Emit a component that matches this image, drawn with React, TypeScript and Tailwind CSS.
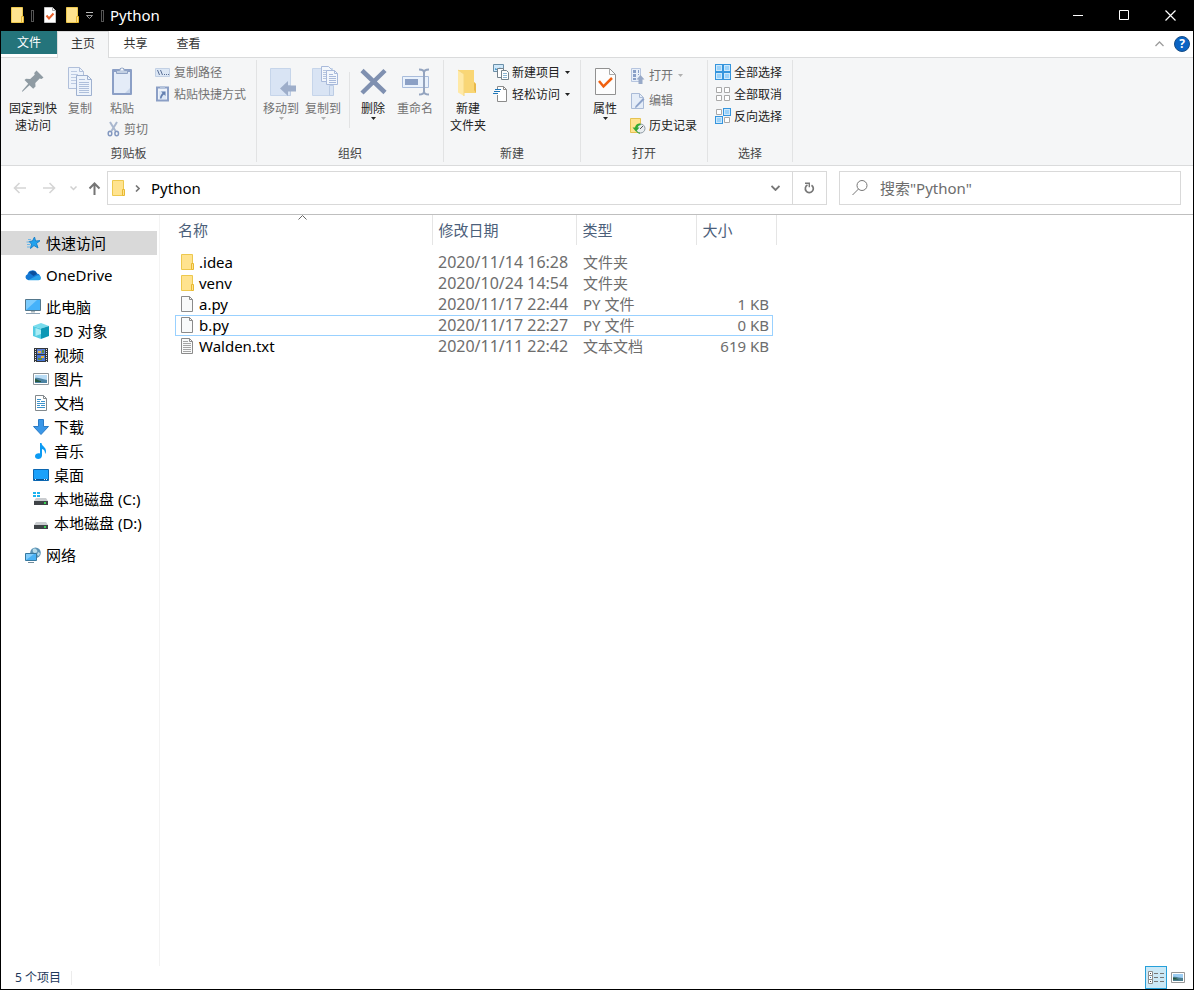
import React from 'react';

interface FileItem {
  name: string;
  kind: 'folder' | 'file' | 'text';
  modified: string;
  type: string;
  size: string;
  focused?: boolean;
}

const files: FileItem[] = [
  { name: '.idea', kind: 'folder', modified: '2020/11/14 16:28', type: '文件夹', size: '' },
  { name: 'venv', kind: 'folder', modified: '2020/10/24 14:54', type: '文件夹', size: '' },
  { name: 'a.py', kind: 'file', modified: '2020/11/17 22:44', type: 'PY 文件', size: '1 KB' },
  { name: 'b.py', kind: 'file', modified: '2020/11/17 22:27', type: 'PY 文件', size: '0 KB', focused: true },
  { name: 'Walden.txt', kind: 'text', modified: '2020/11/11 22:42', type: '文本文档', size: '619 KB' },
];

/* ---------- icons ---------- */

function Svg({ w, h, children }: { w: number; h: number; children: React.ReactNode }) {
  return (
    <svg width={w} height={h} viewBox={`0 0 ${w} ${h}`} fill="none" className="shrink-0" aria-hidden="true">
      {children}
    </svg>
  );
}

function FolderIcon() {
  return (
    <Svg w={14} h={17}>
      <path d="M.5.5h11v15H.5z" fill="#ffe38f" stroke="#edc84e" />
      <path d="M10.5 9.5h2v6h-2z" fill="#ffe38f" stroke="#e8b931" />
    </Svg>
  );
}

function FileIcon({ lines }: { lines?: boolean }) {
  return (
    <Svg w={14} h={17}>
      <path d="M.5.5h8l3 3v12H.5z" fill="#f9fafa" stroke="#8b8b8b" />
      <path d="M8.5.5v3h3" stroke="#8b8b8b" />
      {lines && <path d="M2 3.5h5M2 5.5h8M2 7.5h8M2 9.5h8M2 11.5h8M2 13.5h8" stroke="#a5a5a5" />}
    </Svg>
  );
}

function PropertiesSmallIcon() {
  return (
    <Svg w={12} h={17}>
      <path d="M.5.5h8l3 3v12H.5z" fill="#fff" stroke="#c4c4c4" />
      <path d="M8.5.5v3h3" stroke="#a0a0a0" />
      <path d="m2.5 8.5 2.5 3 4.5-5" stroke="#e8602c" strokeWidth="2" />
    </Svg>
  );
}

function Caret({ light }: { light?: boolean }) {
  return (
    <Svg w={5} h={3}>
      <path d="M0 0h5L2.5 3z" fill={light ? '#b0b0b0' : '#222'} />
    </Svg>
  );
}

function PinIcon() {
  return (
    <Svg w={32} h={32}>
      <path
        d="m19.5 4.5 7 7-2 1.5-1.8-.4-4.4 4.4.2 3.6-2.3 2.2-3.7-3.6-6.700 6.300-.8.2.2-1 6-7-3.700-3.700 1.500-1.200 4.200.2 4.500-4.300-.5-1.800z"
        fill="#8f9ba3"
      />
    </Svg>
  );
}

function CopyIcon() {
  return (
    <Svg w={32} h={32}>
      <path d="M4.5 1.5h11l4 4v17h-15z" fill="#edf3fb" stroke="#b0bfda" />
      <path d="M15.5 1.5v4h4" stroke="#b0bfda" />
      <path d="M7 5.5h6M7 8.5h7M7 11.5h5M7 14.5h5M7 17.5h5" stroke="#bccae2" />
      <path d="M12.5 9.5h11l4 4v16h-15z" fill="#edf3fb" stroke="#9fb1d0" />
      <path d="M23.5 9.5v4h4" stroke="#9fb1d0" />
      <path d="M15 13.5h6M15 16.5h10M15 18.5h10M15 20.5h10M15 22.5h10M15 24.5h10M15 26.5h10" stroke="#aebfdb" />
    </Svg>
  );
}

function PasteIcon() {
  return (
    <Svg w={32} h={32}>
      <rect x="6" y="3" width="20" height="26" rx="1" fill="#8b9fc6" />
      <path d="M8 6h16v21H8z" fill="#e4ecf8" />
      <path d="M19 27l5-5v5z" fill="#c7d5ea" />
      <path d="M10.5 7.5v-3h3a2.5 2.5 0 0 1 5 0h3v3z" fill="#c3d0e3" stroke="#8fa2c4" />
      <circle cx="16" cy="3.5" r="1" fill="#fff" />
    </Svg>
  );
}

function ScissorsIcon() {
  return (
    <Svg w={14} h={16}>
      <path d="m3 1 5.5 9M10 1 4.5 10" stroke="#a9b7ce" strokeWidth="2" />
      <ellipse cx="3" cy="12.5" rx="1.8" ry="2.3" stroke="#8398c0" strokeWidth="1.5" />
      <ellipse cx="9.7" cy="12.5" rx="1.8" ry="2.3" stroke="#8398c0" strokeWidth="1.5" />
    </Svg>
  );
}

function CopyPathIcon() {
  return (
    <Svg w={16} h={16}>
      <path d="M.5 4.5h14v8H.5z" fill="#dce7f5" stroke="#c2d0e4" />
      <path d="m2.5 6 2 5M5.5 6l2 5" stroke="#5b7097" />
      <path d="M9 10.5h1M11 10.5h1M13 10.5h1" stroke="#5b7097" />
    </Svg>
  );
}

function PasteShortcutIcon() {
  return (
    <Svg w={16} h={16}>
      <path d="M2 1.5h11v13H2z" fill="#eef3fa" stroke="#8b9fc6" strokeWidth="2" />
      <path d="M5 0h5v3H5z" fill="#b5c4dc" />
      <path d="M4 5h7v8H4z" fill="#dde8f6" />
      <path d="M6 5.5h4.5V10L9 8.5C7.5 9.5 7 10.500 6.500 12.500H5C5 10 6 8.500 7.500 7z" fill="#6580b0" />
    </Svg>
  );
}

function MoveToIcon() {
  return (
    <Svg w={32} h={32}>
      <path d="M5.5 2.5h20v27h-20z" fill="#d9e4f4" stroke="#c6d5ea" />
      <path d="M22.5 19.5h3v10h-3z" fill="#d9e4f4" stroke="#bccce4" />
      <path d="M15 22.5 23 15v4.5h8v6h-8V30z" fill="#9eaeca" />
    </Svg>
  );
}

function CopyToIcon() {
  return (
    <Svg w={32} h={32}>
      <path d="M5.5 2.5h20v27h-20z" fill="#d9e4f4" stroke="#c6d5ea" />
      <path d="M22.5 19.5h4v10h-4z" fill="#d9e4f4" stroke="#bccce4" />
      <path d="M14.5.5h7l3 3v12h-10z" fill="#f3f7fc" stroke="#a9badb" />
      <path d="M16 4.5h4M16 6.5h4M16 8.5h4M16 10.5h4M16 12.5h4" stroke="#b7c6e0" />
      <path d="M19.5 4.5h8l3 3v11h-11z" fill="#f3f7fc" stroke="#a9badb" />
      <path d="M27.5 4.5v3h3M22 8.5h4M22 10.5h7M22 12.5h7M22 14.5h7M22 16.5h7" stroke="#a9badb" />
    </Svg>
  );
}

function DeleteIcon() {
  return (
    <Svg w={32} h={32}>
      <path d="m5 4.5 23 22M28 4.5 5 27" stroke="#7f90b0" strokeWidth="4.5" />
    </Svg>
  );
}

function RenameIcon() {
  return (
    <Svg w={32} h={32}>
      <path d="M3.5 10.5h26v11h-26z" fill="#eaf2fc" stroke="#a9bcdb" />
      <path d="M6 13h13v6H6z" fill="#8ba0c5" />
      <path d="M20 3.5c3 0 5 .5 5 3v19c0 2-2 3-5 3M30 3.5c-3 0-5 .5-5 3v19c0 2 2 3 5 3" stroke="#94a4bf" strokeWidth="2" />
    </Svg>
  );
}

function NewFolderIcon() {
  return (
    <Svg w={32} h={32}>
      <path d="M6 4h16v12l2 2v9H10z" fill="#f9d675" />
      <path d="M22 16v8l2 3v-9z" fill="#e9b94b" />
      <path d="m6 4 6 4v22l-6-3.500z" fill="#ffe9a6" />
      <path d="m6 4 6 4v22" stroke="#f5d67e" />
    </Svg>
  );
}

function NewItemIcon() {
  return (
    <Svg w={16} h={16}>
      <path d="M.5.5h10v7H.5z" fill="#cfe8fa" stroke="#6b8fa8" />
      <path d="M2 6h7V5L7 3.500 4 5 2 4z" fill="#4d9cd0" />
      <path d="M4.5 4.5h6v9h-6z" fill="#fff" stroke="#75828c" />
      <path d="M8.500 6.500h5l2 2v7h-7z" fill="#fff" stroke="#75828c" />
      <path d="M10 9.5h4M10 11.5h4M10 13.5h4" stroke="#8cb6d3" />
    </Svg>
  );
}

function EasyAccessIcon() {
  return (
    <Svg w={16} h={16}>
      <path d="M4.5 3V.5h6l3 3v12h-9V9" fill="#fff" stroke="#8b8b8b" />
      <path d="M10.5.5v3h3" stroke="#8b8b8b" />
      <path d="M2 3.5h6M1 5.5h6M0 7.5h5" stroke="#1f77b8" />
    </Svg>
  );
}

function PropertiesIcon() {
  return (
    <Svg w={32} h={32}>
      <path d="M6.5 2.5h14l6 6v20h-20z" fill="#fdfdfd" stroke="#919191" />
      <path d="M20.5 2.5v6h6" stroke="#a9a9a9" />
      <path d="m10 15 4.5 5.5L23 12" stroke="#f0600f" strokeWidth="2.5" />
    </Svg>
  );
}

function OpenIcon() {
  return (
    <Svg w={16} h={16}>
      <path d="M1.5.5h9v13h-9z" fill="#e8eff9" stroke="#b6c5df" />
      <path d="M3 2h3v3H3zM3 6h3v3H3zM3 10h3v2H3zM8 2h1v3H8zM8 6h1v1H8z" fill="#899fc7" />
      <path d="m10.500 7 4 4.500h-2V16h-4v-4.500h-2z" fill="#98a9c8" />
    </Svg>
  );
}

function EditIcon() {
  return (
    <Svg w={16} h={16}>
      <path d="M1.5.5h8l4 4v11h-12z" fill="#e5edf8" stroke="#aabbd7" />
      <path d="M9.5.5v4h4" stroke="#aabbd7" />
      <path d="m13 5 1.5 1.5-8 8L5 15l.5-2z" fill="#8da3ca" />
    </Svg>
  );
}

function HistoryIcon() {
  return (
    <Svg w={16} h={16}>
      <path d="M.5.5h10v14H.5z" fill="#ffe38f" stroke="#e5c252" />
      <circle cx="10.500" cy="10.500" r="4.500" fill="#e9edf0" stroke="#8d9aa3" />
      <path d="m10 11 3-3" stroke="#555" />
      <path d="M10 5.5a5 5 0 0 0-5 4H2.500l3.500 4 3.500-4H7.500A3.500 3.500 0 0 1 11 7z" fill="#33a933" />
      <path d="M6 12.5c1 2 2.500 2.500 4 2.800" stroke="#33a933" />
    </Svg>
  );
}

const cells = [
  [0, 0],
  [8, 0],
  [0, 8],
  [8, 8],
];

function SelectIcon({ on }: { on: number[] }) {
  return (
    <Svg w={16} h={16}>
      {cells.map(([x, y], i) =>
        on.includes(i) ? (
          <g key={i}>
            <path d={`M${x} ${y}h8v8h-8z`} fill="#3595dd" />
            <path d={`M${x + 1} ${y + 1}h6v6h-6z`} fill="#cde8fb" />
            <path d={`M${x + 2} ${y + 2}h4v4h-4z`} fill="#9ad2fa" />
          </g>
        ) : (
          <path key={i} d={`M${x + 1.5} ${y + 1.5}h5v5h-5z`} fill="#fff" stroke="#a9a9a9" />
        ),
      )}
    </Svg>
  );
}

function StarIcon() {
  return (
    <Svg w={16} h={16}>
      <path d="m9.500 2 1 4 4.500-.3-3.500 2.800 1.500 4.500L9 10.500 5.500 13.500l1-4.500L4 6.500l3.500-.5z" fill="#22a2ee" stroke="#1782cc" />
      <path d="M3 4.500h3M1.500 7h3M2 9.500h3M2 12h3" stroke="#6cb7e8" />
    </Svg>
  );
}

function CloudIcon() {
  return (
    <Svg w={16} h={16}>
      <path d="M3 13a3 3 0 0 1-.5-5.800A5 5 0 0 1 12 6.500a3.500 3.500 0 0 1 1.500 6.500z" fill="#1478d4" />
      <path d="M4 5.500a5 5 0 0 1 8 1.200L8.500 9z" fill="#0a4f9e" />
      <path d="M3 13.200 12 8.500a2.800 2.800 0 0 1 4 2.200 2.500 2.500 0 0 1-2.500 2.500z" fill="#2aa3ea" />
    </Svg>
  );
}

function PcIcon() {
  return (
    <Svg w={16} h={16}>
      <path d="M.5.5h15v11H.5z" fill="#45b2fa" stroke="#53778c" />
      <path d="M1 11V1h11z" fill="#7dccfd" />
      <path d="M6 12h4v1.500H6z" fill="#a8b4ba" />
      <path d="M1 14.500h14" stroke="#8aa0b3" />
    </Svg>
  );
}

function CubeIcon() {
  return (
    <Svg w={16} h={16}>
      <path d="m8 0 8 3-8 2.500L0 3z" fill="#78dced" />
      <path d="m0 3 8 2.500V16l-8-3z" fill="#52cce3" />
      <path d="m16 3-8 2.500V16l8-3z" fill="#0c97b5" />
      <path d="m2.500 5 5.500 2v4l-5.500 2z" fill="#a9ecf5" />
    </Svg>
  );
}

function VideoIcon() {
  return (
    <Svg w={16} h={16}>
      <path d="M1 1h14v14H1z" fill="#33373b" />
      <path d="M2.5 2v13M13.5 2v13" stroke="#e5e5e5" strokeDasharray="1 1" />
      <path d="M4 2h8v5H4z" fill="#5b7fd6" />
      <path d="M4 8h8v6H4z" fill="#4777d8" />
      <path d="M5 4h3v2H5zM8 9h3v2H8z" fill="#e8b444" />
      <path d="M9 3h2v3H9zM5 11h4v2H5z" fill="#61873a" />
    </Svg>
  );
}

function PictureIcon() {
  return (
    <Svg w={16} h={16}>
      <path d="M.5 2.5h15v11H.5z" fill="#fff" stroke="#8f969b" />
      <path d="M2 4h12v8H2z" fill="#b9dcf5" />
      <path d="M2 7c3-1 6 1 12 2v3H2z" fill="#4c83a3" />
      <path d="M2 8c2 0 4 2 6 2v1H2z" fill="#27593f" />
    </Svg>
  );
}

function DocumentIcon() {
  return (
    <Svg w={16} h={16}>
      <path d="M2.5.5h8l3 3v12h-11z" fill="#fff" stroke="#82898d" />
      <path d="M10.5.5v3h3" stroke="#82898d" />
      <path d="M4 4.5h4M4 6.5h3M8 6.5h4M4 8.500h8M4 10.500h3M8 10.500h4M4 12.500h8" stroke="#3e93cb" />
    </Svg>
  );
}

function DownloadIcon() {
  return (
    <Svg w={16} h={16}>
      <path d="M5.5.5h5v7h5L8 15.500.5 7.500h5z" fill="#3a97e8" stroke="#2a7bc6" />
    </Svg>
  );
}

function MusicIcon() {
  return (
    <Svg w={16} h={16}>
      <path d="M7 0h1.500c.5 3.500 4.500 4 4.500 8 0 1.500-.5 2.500-1 3 .2-3-1-4.500-3-5v6.500C9 15 7 16 5.200 16 3.500 16 2 15 2 13.200c0-2 2.500-3.400 5-2.700z" fill="#0c9bf3" />
    </Svg>
  );
}

function DesktopIcon() {
  return (
    <Svg w={16} h={16}>
      <path d="M.5 2.5h15v11H.5z" fill="#1ba1fb" stroke="#0b66b0" />
      <path d="M1 12.5h14" stroke="#0a4f8d" />
      <path d="M2 12.5h1M11 12.5h1M13 12.5h1" stroke="#e3f3ff" />
    </Svg>
  );
}

function DriveIcon({ system }: { system?: boolean }) {
  return (
    <Svg w={16} h={16}>
      <path d="M3 7h10l2 3H1z" fill="#c9cccf" />
      <path d="M1 10h14v4H1z" fill="#3f4347" />
      <path d="M11 11h2v2h-2z" fill="#39d353" />
      {system && <path d="M0 1h3v2H0zM4 1h3v2H4zM0 4h3v2H0zM4 4h3v2H4z" fill="#1bb3ef" />}
    </Svg>
  );
}

function NetworkIcon() {
  return (
    <Svg w={16} h={16}>
      <circle cx="10.500" cy="5.800" r="5.300" fill="#5b93b5" />
      <path d="M8 2c2-1 3 0 4 1s0 3-2 3-3-2-2-4zM13 5l2 1-1 3-2-1z" fill="#b8dbe8" />
      <path d="M.5 6.5h11v7H.5z" fill="#49b2f5" stroke="#36789f" />
      <path d="M1 13V7h8z" fill="#83cdfb" />
      <path d="M3 15.5h6" stroke="#718c9c" />
    </Svg>
  );
}

/* ---------- ribbon ---------- */

function RibbonGroup({ label, className, children }: { label: string; className: string; children: React.ReactNode }) {
  return (
    <section aria-label={label} className={`flex shrink-0 flex-col justify-between gap-1 border-r border-[#e2e3e4] ${className}`}>
      <div className="flex items-start">{children}</div>
      <div className="text-center text-[#444]">{label}</div>
    </section>
  );
}

interface BigButtonProps {
  icon: React.ReactNode;
  lines: string[];
  className: string;
  disabled?: boolean;
  menu?: boolean;
}

function BigButton({ icon, lines, className, disabled, menu }: BigButtonProps) {
  return (
    <button disabled={disabled} className={`flex shrink-0 flex-col items-center pt-1.5 text-[#222] disabled:text-[#727272] ${className}`}>
      {icon}
      <span className="mt-0.5 block">
        {lines.map((line) => (
          <span key={line} className="block whitespace-nowrap">{line}</span>
        ))}
      </span>
      {menu && <Caret light={disabled} />}
    </button>
  );
}

interface SmallButtonProps {
  icon: React.ReactNode;
  label: string;
  className?: string;
  disabled?: boolean;
  menu?: boolean;
}

function SmallButton({ icon, label, className = 'h-[22px]', disabled, menu }: SmallButtonProps) {
  return (
    <button disabled={disabled} className={`flex items-center gap-[3px] whitespace-nowrap text-[#222] disabled:text-[#727272] ${className}`}>
      {icon}
      <span className="mr-0.5">{label}</span>
      {menu && <Caret light={disabled} />}
    </button>
  );
}

function Ribbon() {
  return (
    <div className="flex border-b border-[#dadbdc] bg-[#f5f6f7] pt-0.5 pb-[3px] text-[12px] leading-[17px]">
      <RibbonGroup label="剪贴板" className="w-[256px]">
        <BigButton icon={<PinIcon />} lines={['固定到快', '速访问']} className="w-16" />
        <BigButton icon={<CopyIcon />} lines={['复制']} className="w-[30px]" disabled />
        <div className="ml-[7px] flex w-[53px] flex-col">
          <BigButton icon={<PasteIcon />} lines={['粘贴']} className="w-10" disabled />
          <SmallButton icon={<ScissorsIcon />} label="剪切" className="ml-[5px] h-6" disabled />
        </div>
        <div className="flex flex-col pt-px">
          <SmallButton icon={<CopyPathIcon />} label="复制路径" disabled />
          <SmallButton icon={<PasteShortcutIcon />} label="粘贴快捷方式" disabled />
        </div>
      </RibbonGroup>

      <RibbonGroup label="组织" className="w-[187px]">
        <BigButton icon={<MoveToIcon />} lines={['移动到']} className="ml-[3px] w-[42px]" disabled menu />
        <BigButton icon={<CopyToIcon />} lines={['复制到']} className="w-[42px]" disabled menu />
        <div className="mt-3 mr-0.5 ml-[5px] h-14 w-px bg-[#e2e3e4]" />
        <BigButton icon={<DeleteIcon />} lines={['删除']} className="w-[42px]" menu />
        <BigButton icon={<RenameIcon />} lines={['重命名']} className="w-[42px]" disabled />
      </RibbonGroup>

      <RibbonGroup label="新建" className="w-[137px]">
        <BigButton icon={<NewFolderIcon />} lines={['新建', '文件夹']} className="w-12" />
        <div className="ml-px flex flex-col pt-px">
          <SmallButton icon={<NewItemIcon />} label="新建项目" menu />
          <SmallButton icon={<EasyAccessIcon />} label="轻松访问" menu />
        </div>
      </RibbonGroup>

      <RibbonGroup label="打开" className="w-[127px]">
        <BigButton icon={<PropertiesIcon />} lines={['属性']} className="w-12" menu />
        <div className="ml-px flex flex-col pt-[3px]">
          <SmallButton icon={<OpenIcon />} label="打开" className="h-[25px]" disabled menu />
          <SmallButton icon={<EditIcon />} label="编辑" className="h-[25px]" disabled />
          <SmallButton icon={<HistoryIcon />} label="历史记录" className="h-[25px]" />
        </div>
      </RibbonGroup>

      <RibbonGroup label="选择" className="w-[85px]">
        <div className="ml-[7px] flex flex-col pt-px">
          <SmallButton icon={<SelectIcon on={[0, 1, 2, 3]} />} label="全部选择" />
          <SmallButton icon={<SelectIcon on={[]} />} label="全部取消" />
          <SmallButton icon={<SelectIcon on={[1, 2]} />} label="反向选择" />
        </div>
      </RibbonGroup>
    </div>
  );
}

/* ---------- window parts ---------- */

function TitleBar() {
  return (
    <header className="flex h-[31px] items-center bg-black text-white">
      <div className="flex flex-1 items-center pl-2.5">
        <FolderIcon />
        <span className="mr-2.5 ml-1.5 h-3 w-[3px] border border-[#555]" />
        <PropertiesSmallIcon />
        <button aria-label="新建文件夹" className="ml-2.5"><FolderIcon /></button>
        <button aria-label="自定义快速访问工具栏" className="mr-2 ml-1.5">
          <Svg w={7} h={7}>
            <path d="M0 .5h7" stroke="#bbb" />
            <path d="M.5 3.5h6l-3 3z" stroke="#999" />
          </Svg>
        </button>
        <span className="h-3 w-[3px] border border-[#555]" />
        <h1 className="ml-1.5 pb-0.5 text-[15px] leading-5">Python</h1>
      </div>
      <button aria-label="最小化" className="flex h-full w-[46px] items-center justify-center">
        <Svg w={11} h={11}><path d="M0 5.5h10" stroke="#fff" /></Svg>
      </button>
      <button aria-label="最大化" className="flex h-full w-[46px] items-center justify-center">
        <Svg w={11} h={11}><path d="M.5.5h9v9h-9z" stroke="#fff" /></Svg>
      </button>
      <button aria-label="关闭" className="flex h-full w-[46px] items-center justify-center">
        <Svg w={11} h={11}><path d="m.5.5 10 10M10.5.5l-10 10" stroke="#fff" strokeWidth="1.2" /></Svg>
      </button>
    </header>
  );
}

function Tabs() {
  return (
    <nav className="flex h-[27px] border-b border-[#dadbdc] text-[12px] leading-6 text-[#333]">
      <button className="h-[23px] w-14 bg-[#24747b] text-white">文件</button>
      <button className="-mb-px w-[52px] border-x border-t border-[#dadbdc] bg-[#f5f6f7] pb-0.5">主页</button>
      <button className="w-[53px]">共享</button>
      <button className="w-[53px]">查看</button>
      <div className="flex flex-1 items-center justify-end gap-2.5 pr-[3px]">
        <button aria-label="最小化功能区">
          <Svg w={9} h={6}><path d="m.5 5 4-4 4 4" stroke="#9c9c9c" strokeWidth="1.3" /></Svg>
        </button>
        <button aria-label="帮助" className="size-4 rounded-full border border-[#174d86] bg-[#0a64c4] text-center text-[12px] leading-[14px] font-bold text-white">
          ?
        </button>
      </div>
    </nav>
  );
}

function AddressBar() {
  return (
    <div className="flex h-[49px] items-center border-b border-[#bfbfbf] pr-3 pb-1">
      <div className="flex w-[106px] items-center pl-3">
        <button aria-label="后退" disabled>
          <Svg w={13} h={12}><path d="M13 6H1.500M6.500 1l-5 5 5 5" stroke="#d5d5d5" strokeWidth="1.6" /></Svg>
        </button>
        <button aria-label="前进" disabled className="ml-[17px]">
          <Svg w={13} h={12}><path d="M0 6h11.500M6.500 1l5 5-5 5" stroke="#d5d5d5" strokeWidth="1.6" /></Svg>
        </button>
        <button aria-label="最近浏览的位置" className="ml-3.5">
          <Svg w={7} h={5}><path d="m.5.5 3 3 3-3" stroke="#d0d0d0" strokeWidth="1.5" /></Svg>
        </button>
        <button aria-label="上移" className="ml-[11px]">
          <Svg w={13} h={13}><path d="M6.500 13V1.500M1.500 6.500l5-5 5 5" stroke="#757575" strokeWidth="2" /></Svg>
        </button>
      </div>
      <div className="flex h-[34px] min-w-0 flex-1 items-center border border-[#d9d9d9]">
        <span className="ml-1"><FolderIcon /></span>
        <span className="ml-[9px]">
          <Svg w={5} h={7}><path d="m1 .5 3 3-3 3" stroke="#777" strokeWidth="1.6" /></Svg>
        </span>
        <button className="ml-[11px] text-black">Python</button>
        <button aria-label="以前的位置" className="mr-3 ml-auto">
          <Svg w={9} h={6}><path d="m.5 1 4 4 4-4" stroke="#777" strokeWidth="1.8" /></Svg>
        </button>
        <button aria-label="刷新" className="flex h-full w-[34px] items-center justify-center border-l border-[#d9d9d9]">
          <Svg w={11} h={12}>
            <path d="M7.500 3.200A4 4 0 1 1 3.500 3" stroke="#777" strokeWidth="1.7" />
            <path d="M1 1.200h4.300v4" stroke="#777" strokeWidth="1.4" />
          </Svg>
        </button>
      </div>
      <label className="ml-3 flex h-[34px] w-[342px] items-center border border-[#d9d9d9] pl-3">
        <Svg w={16} h={16}>
          <circle cx="10" cy="5.5" r="5" stroke="#777" />
          <path d="M6.500 9 .5 15" stroke="#777" />
        </Svg>
        <input
          type="search"
          aria-label="搜索"
          placeholder={'搜索"Python"'}
          className="ml-3 min-w-0 flex-1 bg-transparent outline-none placeholder:text-[#6d6d6d]"
        />
      </label>
    </div>
  );
}

const pcItems = [
  { label: '3D 对象', icon: <CubeIcon /> },
  { label: '视频', icon: <VideoIcon /> },
  { label: '图片', icon: <PictureIcon /> },
  { label: '文档', icon: <DocumentIcon /> },
  { label: '下载', icon: <DownloadIcon /> },
  { label: '音乐', icon: <MusicIcon /> },
  { label: '桌面', icon: <DesktopIcon /> },
  { label: '本地磁盘 (C:)', icon: <DriveIcon system /> },
  { label: '本地磁盘 (D:)', icon: <DriveIcon /> },
];

function NavItem({ icon, label, className = 'pl-6' }: { icon: React.ReactNode; label: string; className?: string }) {
  return (
    <a href="#" className={`flex h-6 items-center gap-[5px] whitespace-nowrap text-black ${className}`}>
      {icon}
      {label}
    </a>
  );
}

function Sidebar() {
  return (
    <nav className="flex w-[159px] shrink-0 flex-col gap-2 border-r border-[#f3f3f3] pt-4">
      <NavItem icon={<StarIcon />} label="快速访问" className="mr-0.5 bg-[#d9d9d9] pl-6" />
      <NavItem icon={<CloudIcon />} label="OneDrive" />
      <div>
        <NavItem icon={<PcIcon />} label="此电脑" />
        {pcItems.map((item) => (
          <NavItem key={item.label} icon={item.icon} label={item.label} className="pl-8" />
        ))}
      </div>
      <NavItem icon={<NetworkIcon />} label="网络" />
    </nav>
  );
}

function FileTable() {
  return (
    <main className="min-w-0 flex-1 pl-[15px]">
      <table className="w-[601px] table-fixed border-collapse text-left">
        <thead>
          <tr className="h-[30px] text-[#4c607a] [&>th]:border-r [&>th]:border-[#e5e5e5] [&>th]:p-0 [&>th]:font-normal">
            <th className="relative w-[257px]">
              <span className="ml-[3px]">名称</span>
              <span className="absolute top-0 left-[123px]">
                <Svg w={9} h={5}><path d="m.5 4.5 4-4 4 4" stroke="#666" /></Svg>
              </span>
            </th>
            <th className="w-36"><span className="ml-1.5">修改日期</span></th>
            <th className="w-[120px]"><span className="ml-1.5">类型</span></th>
            <th className="w-20"><span className="ml-1.5">大小</span></th>
          </tr>
        </thead>
        <tbody className="before:block before:h-[7px]">
          {files.map((file) => (
            <tr
              key={file.name}
              className={`relative h-[21px] text-[#6d6d6d] [&>td]:p-0 ${
                file.focused ? 'after:absolute after:inset-y-0 after:right-[3px] after:left-0 after:border after:border-[#99d1ff]' : ''
              }`}
            >
              <td>
                <span className="flex items-center gap-1 pl-1.5 text-black">
                  {file.kind === 'folder' ? <FolderIcon /> : <FileIcon lines={file.kind === 'text'} />}
                  {file.name}
                </span>
              </td>
              <td className="pl-1.5! text-[16px] leading-[21px] whitespace-nowrap">{file.modified}</td>
              <td className="pl-[7px]!">{file.type}</td>
              <td className="pr-[7px]! text-right">{file.size}</td>
            </tr>
          ))}
        </tbody>
      </table>
    </main>
  );
}

function StatusBar() {
  return (
    <footer className="flex h-[23px] items-center text-[12px] leading-4 text-[#1e395b]">
      <span className="pl-3.5">5 个项目</span>
      <span className="ml-2.5 h-3.5 w-px bg-[#ececec]" />
      <button aria-label="详细信息" className="ml-auto flex h-[23px] w-[22px] items-center justify-center border border-[#26a0da] bg-[#cbe8f6]">
        <Svg w={16} h={13}>
          <path d="M.5.5h4v4h-4zM.5 4.5h4v4h-4zM.5 8.5h4v4h-4z" fill="#fff" stroke="#8c8c8c" />
          <path d="M2 2.5h1M2 10.5h1" stroke="#444" />
          <path d="M2 6.5h1" stroke="#2b79b9" />
          <path d="M6 2.5h4M12 2.5h4M6 6.5h4M12 6.5h4M6 10.5h4M12 10.5h4" stroke="#777" />
        </Svg>
      </button>
      <button aria-label="大图标" className="mr-1 flex h-[23px] w-[22px] items-center justify-center">
        <Svg w={14} h={11}>
          <path d="M.5.5h13v10H.5z" fill="#fff" stroke="#979797" />
          <path d="M2 2h10v7H2z" fill="#9ccdf3" />
          <path d="M2 5c3-1 6 1 10 1v3H2z" fill="#4d7e8f" />
          <path d="M2 6c2-1 4 1 6 1.500H2z" fill="#24583f" />
        </Svg>
      </button>
    </footer>
  );
}

export default function App() {
  return (
    <div className="flex min-h-screen flex-col border-x border-b border-black bg-white font-['Noto_Sans','Noto_Sans_CJK_SC',sans-serif] text-[15px] leading-[21px]">
      <TitleBar />
      <Tabs />
      <Ribbon />
      <AddressBar />
      <div className="flex flex-1">
        <Sidebar />
        <FileTable />
      </div>
      <StatusBar />
    </div>
  );
}
